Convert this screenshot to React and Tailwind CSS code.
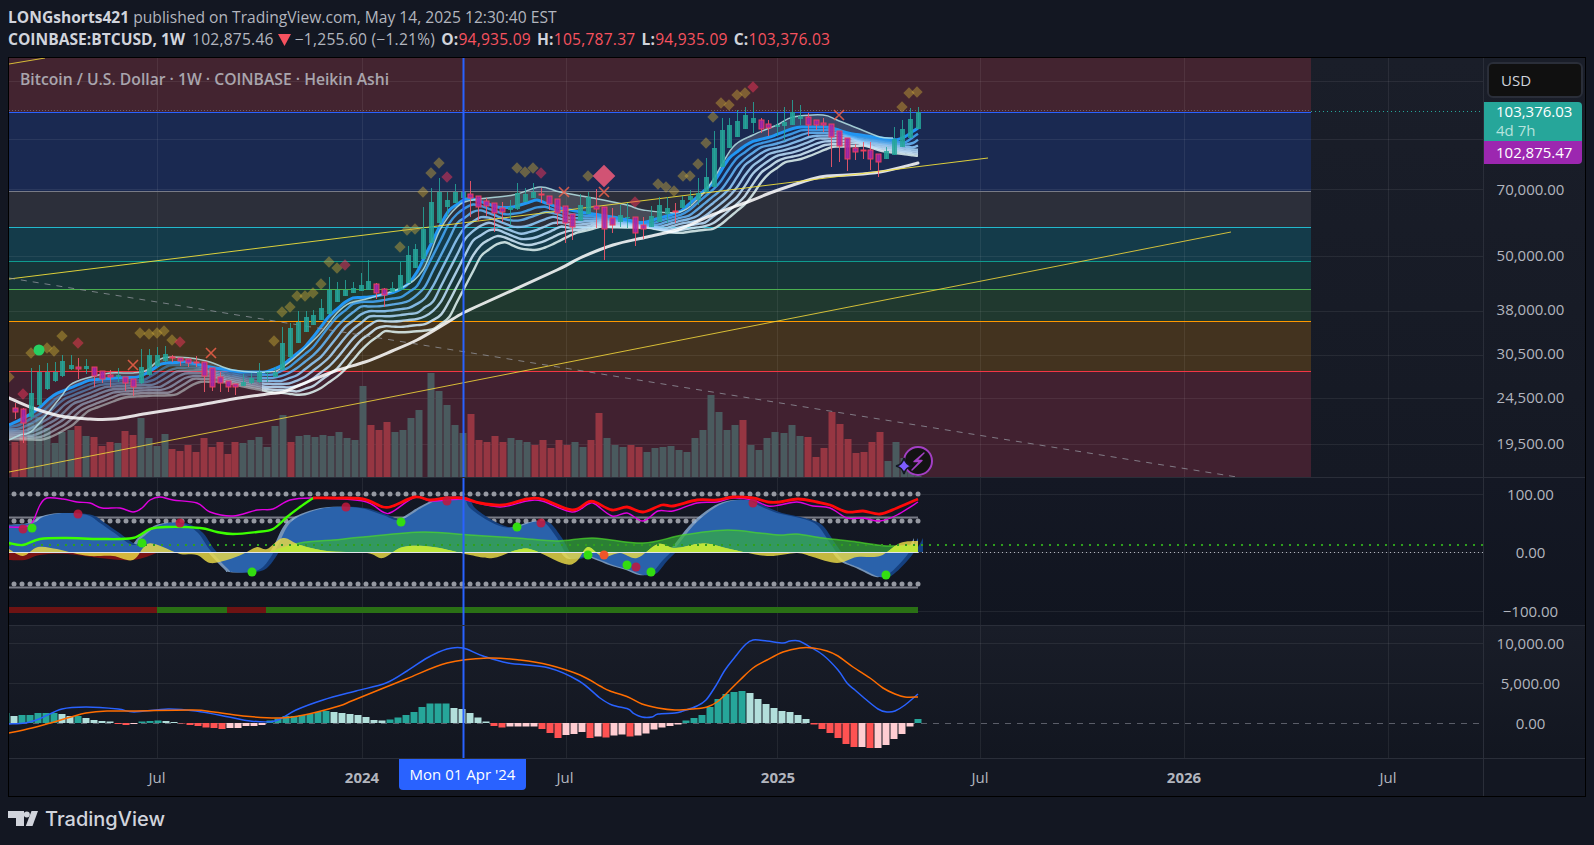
import React from "react";

const smooth = (p) => {
  let d = `M${p[0][0]} ${p[0][1]}`;
  for (let i = 0; i < p.length - 1; i++) {
    const a = p[Math.max(i - 1, 0)], b = p[i], c = p[i + 1], e = p[Math.min(i + 2, p.length - 1)];
    const c1 = [b[0] + (c[0] - a[0]) / 6, b[1] + (c[1] - a[1]) / 6];
    const c2 = [c[0] - (e[0] - b[0]) / 6, c[1] - (e[1] - b[1]) / 6];
    d += `C${c1[0].toFixed(1)} ${c1[1].toFixed(1)} ${c2[0].toFixed(1)} ${c2[1].toFixed(1)} ${c[0]} ${c[1]}`;
  }
  return d;
};
const interp = (p, x) => {
  if (x <= p[0][0]) return p[0][1];
  for (let i = 0; i < p.length - 1; i++) {
    if (x <= p[i + 1][0]) {
      const t = (x - p[i][0]) / (p[i + 1][0] - p[i][0]);
      return p[i][1] + t * (p[i + 1][1] - p[i][1]);
    }
  }
  return p[p.length - 1][1];
};

const GRID_X = [157, 362, 566, 777, 980, 1184, 1388];

const CANDLES = [
  [15,408,412,403,419,0],[23,409,423,408,443,0],[31,393,417,368,420,1],[39,372,405,365,408,1],[47,372,389,363,390,1],[55,372,381,362,382,1],[62,361,376,355,377,1],[71,365,369,355,370,1],[78,367,369,358,379,0],[86,366,369,359,374,1],[94,367,376,367,387,0],[102,371,379,371,383,0],[110,375,377,370,387,0],[118,375,377,368,382,1],[125,377,383,377,391,0],[133,379,387,379,396,0],[141,367,383,349,384,1],[149,355,375,349,376,1],[157,355,366,347,367,1],[165,354,361,346,362,1],[172,357,358,355,362,0],[180,358,361,358,366,0],[188,359,363,359,367,0],[196,362,363,356,367,0],[204,362,376,362,392,0],[212,368,387,368,391,0],[220,377,383,372,392,0],[228,381,387,381,392,0],[235,384,387,384,395,0],[243,382,386,374,386,1],[251,378,383,373,384,1],[259,372,382,363,383,1],[267,372,373,372,382,1],[275,372,377,367,377,1],
  [282,343,370,327,370,1],[290,328,357,323,358,1],[298,322,343,311,343,1],[306,317,332,311,332,1],[313,315,325,310,325,1],[321,308,320,299,320,1],[329,290,314,277,314,1],[337,290,302,282,302,1],[345,290,296,280,296,1],[353,288,293,282,293,1],[361,285,291,273,291,1],[368,281,290,260,290,1],[376,284,293,283,299,0],[384,289,295,288,307,0],[392,288,292,282,292,1],[400,275,290,262,290,1],[408,255,283,246,283,1],[415,249,268,244,268,1],[423,229,259,207,259,1],[431,202,243,188,243,1],[439,192,223,178,223,1],[447,200,207,192,217,1],[455,192,203,184,203,1],[463,192,198,184,198,1],
  [470,194,198,181,217,0],[478,196,207,196,221,0],[486,201,206,198,216,0],[494,203,213,203,232,0],[502,208,212,202,222,0],[510,207,210,200,225,1],[517,193,209,183,210,1],[525,194,202,188,202,1],[533,192,198,183,198,1],[541,194,195,188,203,0],[549,196,204,196,210,0],[557,199,213,199,225,0],[565,206,223,206,243,0],[572,214,227,214,240,0],[580,205,221,194,221,1],[588,197,214,192,214,1],[596,206,209,189,228,0],[604,207,229,207,260,0],[612,218,225,208,233,0],[620,215,222,205,227,1],[627,217,218,203,228,1],[635,217,233,217,246,0],[643,225,229,217,239,0],[651,216,227,206,227,1],[659,205,222,197,222,1],[667,208,214,197,223,1],[675,211,212,203,223,0],[682,200,208,196,208,1],
  [690,196,200,190,206,1],[698,193,200,178,205,1],[706,177,192,158,192,1],[714,148,187,131,187,1],[722,130,167,118,167,1],[729,125,148,118,148,1],[737,121,137,110,137,1],[745,115,129,107,129,1],[753,118,123,102,133,1],[761,120,129,118,133,0],[768,124,128,120,136,0],[777,125,127,112,136,1],[784,122,126,107,141,1],[792,112,125,100,125,1],[800,116,119,105,125,1],[808,117,125,113,136,0],[816,120,125,120,130,0],[823,123,125,118,132,0],[831,124,137,124,167,0],[839,131,146,131,162,0],[847,138,159,138,171,0],[855,148,152,144,160,0],[863,150,151,142,159,0],[870,150,159,142,170,0],[878,154,162,154,177,0],[886,151,159,147,159,1],[894,139,155,127,155,1],[902,129,147,120,147,1],[910,119,138,108,138,1],[918,112,129,107,129,1],
];

const VOL = [
  [15,442,0],[23,437,0],[31,423,1],[39,417,1],[47,428,1],[55,443,1],[62,432,1],[71,430,1],[78,426,0],[86,436,1],[94,437,0],[102,446,0],[110,442,0],[118,443,1],[125,431,0],[133,435,0],[141,418,1],[149,438,1],[157,446,1],[165,434,1],[172,449,0],[180,451,0],[188,445,0],[196,452,0],[204,438,0],[212,447,0],[220,442,0],[228,454,0],[235,442,0],[243,443,1],[251,440,1],[259,437,1],[267,447,1],[275,426,1],[283,415,1],[291,442,0],[299,436,1],
  [307,435,1],[315,437,1],[323,435,1],[331,436,1],[339,432,1],[347,438,1],[355,440,1],[363,386,1],[371,425,0],[379,430,0],[387,422,0],[395,432,1],[403,430,1],[411,418,1],[419,410,1],[431,373,1],[439,391,1],[447,405,1],[455,425,1],[463,433,1],[471,414,0],[479,440,0],[487,442,0],[495,436,0],[503,442,0],[511,438,1],[519,440,1],[527,442,1],[535,445,0],[543,440,0],[551,448,0],[559,440,0],[567,445,0],[575,442,1],[583,447,1],[591,440,0],[599,413,0],[607,438,1],[615,445,1],[623,447,1],[631,445,0],[639,447,0],[647,452,1],[655,448,1],[663,447,1],[671,446,1],[679,450,1],[687,452,1],[695,438,1],[703,430,1],[711,395,1],[719,412,1],[727,430,1],[735,425,1],[743,420,0],[751,445,1],[759,450,1],[767,438,1],[775,432,1],
  [784,433,1],[792,425,1],[800,436,1],[808,437,0],[816,457,0],[824,448,0],[832,412,0],[840,424,0],[848,439,0],[856,453,0],[864,452,0],[872,442,0],[880,432,0],[888,461,1],[896,442,1],[904,458,1],[911,470,1],[918,476,1],
];

const TOP = [[9,425],[20,420],[37,410],[53,395],[70,388],[90,380],[117,378],[140,377],[163,363],[187,362],[210,367],[240,372],[267,372],[283,365],[307,345],[330,315],[350,298],[370,297],[397,292],[413,280],[433,240],[447,212],[463,200],[470,198],[500,208],[513,207],[537,200],[560,208],[580,212],[613,217],[643,223],[680,212],[713,183],[730,157],[750,142],[770,137],[797,127],[830,127],[847,133],[880,138],[900,140],[918,128]];
const THIN = [[9,440],[20,435],[33,430],[60,398],[70,385],[87,378],[110,373],[133,373],[147,370],[163,358],[190,358],[210,362],[233,370],[267,372],[283,367],[317,337],[337,313],[350,303],[370,298],[403,287],[423,270],[440,230],[457,207],[473,200],[513,195],[540,187],[560,192],[593,198],[627,205],[643,210],[680,212],[700,197],[713,180],[733,147],[753,135],[777,125],[793,117],[823,115],[837,120],[857,128],[880,137],[893,138]];
const SLOW = [[9,398],[30,407],[60,416],[90,419],[113,419],[150,413],[200,405],[233,399],[267,394],[283,392],[300,385],[335,371],[365,362],[392,351],[417,340],[443,325],[463,313],[480,305],[557,270],[580,258],[613,245],[647,237],[680,229],[712,215],[750,201],[770,193],[793,185],[820,177],[847,175],[880,172],[918,163]];
const OFF = [[9,2],[283,3],[400,5],[520,6.5],[570,5],[600,2.5],[650,1.5],[680,1.5],[720,2.5],[800,3],[880,2.6],[918,2.5]];
const RIBBON_COLORS = ["#2196f3", "#42a5f5", "#64b5f6", "#90caf9", "#a8d4f7", "#bbdefb", "#cfe8f8", "#dcefee"];
const XS = Array.from({ length: 115 }, (_, i) => Math.min(9 + i * 8, 918));
const ribbonLine = (k) =>
  smooth(XS.map((x) => [x, +(interp(TOP, x - k * 5) + k * interp(OFF, x)).toFixed(1)]));

const DIAMONDS = [[31,353],[47,348],[54,351],[9,377],[62,336],[140,333],[149,334],[157,333],[164,331],[172,340],[274,341],[282,312],[290,307],[297,296],[305,296],[313,293],[321,284],[329,262],[337,268],[400,247],[407,230],[415,229],[423,192],[431,173],[439,163],[517,168],[525,172],[533,168],[588,176],[658,184],[666,187],[674,191],[683,176],[690,176],[698,164],[706,143],[713,117],[721,103],[729,105],[737,95],[745,93],[902,107],[909,93],[917,92]];
const RED_DIAMONDS = [[78,343],[23,394],[180,342],[345,265],[447,177],[541,173],[635,202],[753,87]];
const CROSSES = [[133,365],[211,353],[564,192],[604,192],[839,115]];

const WAVE = [[9,525],[33,523],[43,517],[63,513],[87,515],[100,523],[113,532],[133,545],[143,537],[160,525],[180,523],[197,532],[210,550],[227,568],[233,572],[250,572],[263,567],[277,547],[290,523],[310,512],[333,507],[360,508],[383,515],[400,520],[423,507],[443,498],[463,498],[470,508],[487,520],[503,527],[517,527],[533,522],[545,523],[557,538],[570,558],[588,556],[603,561],[613,565],[630,570],[643,575],[652,573],[663,560],[677,546],[693,526],[710,511],[727,502],[747,500],[760,506],[777,513],[800,518],[817,525],[830,543],[843,560],[860,568],[880,577],[890,573],[903,560],[913,547],[918,538]];
const GREEN_LINE = [[9,543],[23,545],[40,539],[67,538],[100,539],[133,538],[150,529],[167,527],[200,528],[217,532],[233,534],[257,532],[273,529],[287,517],[300,507],[313,498]];
const RED_LINE = [[313,498],[333,498],[363,499],[383,507],[393,506],[415,497],[430,500],[447,498],[463,498],[480,503],[503,505],[527,499],[542,499],[572,510],[588,502],[595,502],[612,510],[627,507],[643,512],[662,505],[673,506],[697,500],[717,500],[733,497],[753,498],[768,502],[780,502],[798,499],[817,502],[830,505],[847,512],[863,511],[880,514],[897,508],[918,499]];
const MAG_LINE = [[9,527],[23,527],[32,523],[40,505],[47,498],[63,499],[77,502],[90,503],[102,508],[120,508],[133,512],[142,508],[150,500],[160,497],[173,500],[197,503],[210,512],[233,516],[257,510],[273,509],[290,500],[313,498],[363,501],[383,512],[392,512],[415,497],[430,501],[447,500],[463,499],[470,501],[500,507],[527,501],[542,501],[572,512],[588,504],[595,504],[612,516],[627,513],[643,521],[658,511],[673,511],[697,503],[717,502],[733,498],[753,500],[768,506],[780,505],[797,502],[813,506],[830,508],[847,518],[863,518],[880,521],[897,515],[918,502]];
const GREEN_AREA = [[270,552],[300,543],[333,540],[363,537],[423,532],[470,535],[517,538],[557,541],[593,538],[643,543],[683,535],[727,530],[760,533],[780,535],[797,534],[823,538],[857,542],[887,546],[918,545]];
const RED_AREA = [[9,560],[25,560],[40,555],[67,554],[100,558],[133,560],[157,553]];
const YELLOW = [[9,549],[23,556],[38,547],[57,549],[73,553],[90,556],[113,556],[133,560],[147,544],[163,547],[180,554],[197,555],[210,563],[227,560],[243,554],[257,547],[267,549],[283,538],[300,545],[327,551],[367,553],[383,558],[403,547],[433,547],[470,555],[493,558],[517,550],[533,550],[565,564],[577,561],[588,547],[603,557],[620,553],[637,558],[658,544],[675,548],[697,544],[710,544],[730,549],[767,556],[797,553],[813,557],[837,563],[857,557],[880,556],[900,543],[918,541]];
const OSC_RED_DOTS = [[23,529],[78,514],[180,523],[346,507],[447,501],[541,523],[636,567],[753,503]];
const OSC_GREEN_DOTS = [[32,528],[142,543],[252,572],[401,522],[517,527],[588,555],[627,565],[651,572],[886,575]];
const DOT_XS = Array.from({ length: 115 }, (_, i) => 14 + i * 8).filter((x) => x <= 918);

const HIST = [10,7,8,8,10,10,10,9,7,7,5,3,2,1.5,-1,-2,-1,1.5,2,2.5,2,1,-0.5,-2,-3,-4.5,-5,-6,-5,-5,-3,-3,-2,2.5,4.5,7,7,8,9,11,12,11,10,9,8,6,3,2.5,3.5,5.5,8,11,16,19.5,19.5,19.5,15,14,10,5.5,1.5,-3,-4.5,-3.5,-3.5,-3.5,-3.5,-6,-10,-15,-12,-11,-9,-15,-13.5,-14.5,-12.5,-11.5,-13.5,-12.5,-10.5,-6.5,-4.5,-3,-1.5,2.5,5,8,16,24,29,31,32,30,24,19,15,12,11,8,4,-1.5,-6,-10,-15,-21,-24,-24,-25,-25,-22,-16,-11,-3.5,4];
const MACD_BLUE = [[9,724],[25,723],[39,719],[62,709],[86,707],[118,709],[134,712],[168,709],[196,711],[229,717],[250,721],[275,721],[296,710],[323,700],[356,691],[386,683],[407,671],[427,658],[447,649],[463,648],[483,656],[508,663],[549,668],[579,681],[600,698],[612,705],[628,709],[633,713],[642,717],[652,717],[658,714],[675,713],[683,711],[697,706],[706,700],[715,687],[725,670],[735,657],[745,645],[753,640],[767,641],[783,643],[790,641],[799,641],[810,647],[823,655],[838,670],[847,683],[855,690],[863,697],[878,709],[887,712],[895,711],[905,705],[918,694]];
const MACD_ORANGE = [[9,733],[32,728],[54,722],[71,717],[86,713],[107,711],[136,711],[193,710],[214,712],[243,716],[279,718],[304,715],[339,706],[354,700],[406,679],[447,663],[488,658],[520,660],[549,665],[580,675],[600,686],[610,691],[628,697],[642,704],[658,708],[675,710],[693,709],[707,707],[717,702],[728,692],[740,680],[753,668],[767,660],[783,652],[800,648],[813,648],[827,651],[838,656],[853,667],[870,678],[883,688],[895,694],[905,697],[918,697]];

const Grid = ({ ys, y1, y2 }) => (
  <g stroke="#ffffff" strokeOpacity="0.07" strokeWidth="1">
    {GRID_X.map((x) => <line key={x} x1={x + 0.5} x2={x + 0.5} y1={y1} y2={y2} />)}
    {ys.map((y) => <line key={y} x1={9} x2={1483} y1={y + 0.5} y2={y + 0.5} />)}
  </g>
);
const Cross = ({ y1, y2 }) => <line x1="463.5" x2="463.5" y1={y1} y2={y2} stroke="#2962ff" strokeWidth="2" />;

const Ribbon = ({ opacity, clip }) => (
  <g clipPath={`url(#${clip})`}>
    {[7, 6, 5, 4, 3, 2, 1].map((k) => (
      <path key={k} d={ribbonLine(k)} fill="none" stroke={RIBBON_COLORS[k]} strokeOpacity={opacity} strokeWidth="2.4" />
    ))}
  </g>
);

function MainPlot() {
  const bands = [
    [58, 54, "#432430"], [112, 79, "#1a2951"], [191, 36, "#2c2f3a"], [227, 34, "#143b4a"],
    [261, 28, "#173538"], [289, 32, "#20392f"], [321, 50, "#43331f"], [371, 107, "#412130"],
  ];
  const lines = [[112, "#2962ff"], [191, "#787b86"], [227, "#22b8cc"], [261, "#0f9b8e"], [289, "#4caf50"], [321, "#ff9800"], [371, "#f23645"]];
  return (
    <svg className="block" width="1474" height="419" viewBox="9 58 1474 419">
      <defs>
        <clipPath id="ribbon-left"><rect x="0" y="50" width="262" height="430" /></clipPath>
        <clipPath id="ribbon-right"><rect x="262" y="50" width="700" height="430" /></clipPath>
      </defs>
      {bands.map(([y, h, c]) => <rect key={y} x="9" y={y} width="1302" height={h} fill={c} />)}
      <Grid ys={[81, 139, 189, 256, 311, 355, 398, 444]} y1={58} y2={477} />
      {lines.map(([y, c]) => <line key={y} x1="9" x2="1311" y1={y + 0.5} y2={y + 0.5} stroke={c} strokeWidth="1" />)}
      <line x1="1311" x2="1483" y1="111.5" y2="111.5" stroke="#26a69a" strokeDasharray="1 3" />
      <line x1="9" x2="1311" y1="110.5" y2="110.5" stroke="#9598a1" strokeOpacity="0.5" strokeDasharray="1 2" />
      {VOL.map(([x, t, g]) => (
        <rect key={x} x={x - 3.5} y={t} width="7" height={477 - t} fill={g ? "#4a5a5e" : "#963642"} />
      ))}
      <path d={smooth(THIN) + " " + smooth(TOP.filter((p) => p[0] <= 893).reverse()).replace("M", "L") + "Z"} fill="#a8b0c4" fillOpacity="0.22" />
      <Ribbon opacity={0.5} clip="ribbon-left" />
      <Ribbon opacity={0.88} clip="ribbon-right" />
      <path d={ribbonLine(0)} fill="none" stroke={RIBBON_COLORS[0]} strokeWidth="3" />
      <path d={smooth(THIN)} fill="none" stroke="#b6e3e6" strokeOpacity="0.85" strokeWidth="1.5" />
      <path d={smooth(SLOW)} fill="none" stroke="#ffffff" strokeOpacity="0.86" strokeWidth="3" strokeLinecap="round" />
      <line x1="9" y1="279" x2="988" y2="158" stroke="#f2e03a" strokeOpacity="0.9" strokeWidth="1" />
      <line x1="9" y1="472" x2="1231" y2="232" stroke="#f2d63a" strokeOpacity="0.85" strokeWidth="1" />
      <line x1="9" y1="64" x2="45" y2="58" stroke="#f2d63a" strokeOpacity="0.85" strokeWidth="1" />
      <line x1="9" y1="278" x2="1243" y2="478" stroke="#9598a1" strokeOpacity="0.75" strokeDasharray="6 6" strokeWidth="1" />
      {CANDLES.map(([x, t, b, wt, wb, g]) => (
        <g key={x}>
          <line x1={x + 0.5} x2={x + 0.5} y1={wt} y2={wb} stroke={g ? "#26a69a" : "#f2566a"} strokeOpacity={g ? 0.85 : 0.9} />
          <rect
            x={x - 2}
            y={t}
            width="5"
            height={Math.max(b - t, 1)}
            fill={g ? "#26a69a" : "#a326a8"}
            fillOpacity={g ? 0.85 : 0.9}
            stroke={g ? "none" : "#ee3f5c"}
            strokeWidth="1"
          />
        </g>
      ))}
      {DIAMONDS.map(([x, y]) => (
        <rect key={x + "-" + y} x={x - 4} y={y - 4} width="8" height="8" transform={`rotate(45 ${x} ${y})`} fill="#c9a83a" fillOpacity="0.45" />
      ))}
      {RED_DIAMONDS.map(([x, y]) => (
        <rect key={x + "-" + y} x={x - 4} y={y - 4} width="8" height="8" transform={`rotate(45 ${x} ${y})`} fill="#f2365a" fillOpacity="0.5" />
      ))}
      <rect x="596" y="168" width="16" height="16" transform="rotate(45 604 176)" fill="#f25a7a" fillOpacity="0.85" />
      {CROSSES.map(([x, y]) => (
        <path key={x} d={`M${x - 5} ${y - 5}L${x + 5} ${y + 5}M${x + 5} ${y - 5}L${x - 5} ${y + 5}`} stroke="#f0604a" strokeOpacity="0.85" strokeWidth="1.6" fill="none" />
      ))}
      <circle cx="39" cy="350" r="5.5" fill="#27d063" />
      <Cross y1={58} y2={477} />
      <circle cx="918" cy="461" r="14" fill="#131313" stroke="#a33fc4" strokeWidth="2" />
      <path d="M924 453L914 461.5L920 461.5L912 470L922 460.5L916.5 460.5Z" fill="#131313" stroke="#a33fc4" strokeWidth="1.4" strokeLinejoin="round" />
      <path d="M904 458Q905.5 464.5 912 466Q905.5 467.5 904 474Q902.5 467.5 896 466Q902.5 464.5 904 458Z" fill="#7c5cff" stroke="#131722" strokeWidth="1.5" />
    </svg>
  );
}

function OscPlot() {
  const area = (pts, base = 552) => smooth(pts) + `L${pts[pts.length - 1][0]} ${base}L${pts[0][0]} ${base}Z`;
  return (
    <svg className="block" width="1474" height="147" viewBox="9 478 1474 147">
      <defs>
        <clipPath id="green-area"><path d={area(GREEN_AREA)} /></clipPath>
      </defs>
      <Grid ys={[494, 552, 611]} y1={478} y2={625} />
      <line x1="9" x2="918" y1="517.5" y2="517.5" stroke="#787b86" strokeWidth="2" />
      <line x1="9" x2="918" y1="587.5" y2="587.5" stroke="#787b86" strokeWidth="2" />
      {[494, 521, 584].map((y) =>
        DOT_XS.map((x) => <circle key={x + "-" + y} cx={x} cy={y} r="2.5" fill="#9598a1" />)
      )}
      <path d={area(RED_AREA)} fill="#7a1414" />
      <path d={area(WAVE)} transform="translate(-4 0)" fill="#8fb3dc" fillOpacity="0.8" />
      <path d={area(WAVE)} transform="translate(5 0)" fill="#15407f" />
      <path d={area(WAVE)} fill="#2a62ab" />
      <path d={area(GREEN_AREA)} fill="#37b33c" fillOpacity="0.68" />
      <path d={smooth(GREEN_AREA)} fill="none" stroke="#4cd92a" strokeOpacity="0.7" strokeWidth="1.5" />
      <path d={area(YELLOW)} fill="#ecdc47" fillOpacity="0.82" />
      <path d={area(YELLOW)} fill="#bde63a" clipPath="url(#green-area)" />
      <line x1="9" x2="918" y1="552.5" y2="552.5" stroke="#e0e3eb" strokeWidth="1" />
      <line x1="918" x2="1483" y1="552.5" y2="552.5" stroke="#b2b5be" strokeDasharray="1 3" />
      <line x1="9" x2="1483" y1="545" y2="545" stroke="#2f9e1e" strokeWidth="2" strokeDasharray="2 6" />
      <path d={smooth(MAG_LINE)} fill="none" stroke="#e000e0" strokeWidth="1.4" />
      <path d={smooth(GREEN_LINE)} fill="none" stroke="#3cff00" strokeWidth="2.4" />
      <path d={smooth(RED_LINE)} fill="none" stroke="#ff0a0a" strokeWidth="2.8" />
      {OSC_RED_DOTS.map(([x, y]) => <circle key={x} cx={x} cy={y} r="4.5" fill="#c3173c" fillOpacity="0.85" />)}
      <circle cx="604" cy="555" r="4.5" fill="#f2552a" />
      {OSC_GREEN_DOTS.map(([x, y]) => <circle key={x} cx={x} cy={y} r="4.5" fill="#33dd11" />)}
      <rect x="9" y="607" width="148" height="6" fill="#6e1313" />
      <rect x="157" y="607" width="70" height="6" fill="#2a7015" />
      <rect x="227" y="607" width="39" height="6" fill="#6e1313" />
      <rect x="266" y="607" width="652" height="6" fill="#2a7015" />
      <Cross y1={478} y2={625} />
    </svg>
  );
}

function MacdPlot() {
  return (
    <svg className="block" width="1474" height="132" viewBox="9 626 1474 132">
      <Grid ys={[643, 683]} y1={626} y2={758} />
      <line x1="9" x2="1483" y1="723.5" y2="723.5" stroke="#787b86" strokeOpacity="0.7" strokeDasharray="6 6" />
      {HIST.map((v, i) => {
        const x = 918 - 8 * (HIST.length - 1 - i);
        const prev = i ? HIST[i - 1] : v;
        const c = v >= 0 ? (v >= prev ? "#26a69a" : "#b2dfdb") : v >= prev ? "#ffcdd2" : "#ff5252";
        return <rect key={x} x={x - 3.5} y={v >= 0 ? 723 - v : 723} width="7" height={Math.abs(v)} fill={c} />;
      })}
      <path d={smooth(MACD_BLUE)} fill="none" stroke="#2962ff" strokeWidth="1.5" />
      <path d={smooth(MACD_ORANGE)} fill="none" stroke="#ff6d00" strokeWidth="1.5" />
      <Cross y1={626} y2={758} />
    </svg>
  );
}

const AxisLabel = ({ top, children }) => (
  <span className={`absolute left-0 w-[93px] text-center -translate-y-1/2 text-[15px] leading-[18px] text-[#b2b5be] ${top}`}>{children}</span>
);

const Red = ({ children }) => <span className="text-[#f7525f]">{children}</span>;

export default function App() {
  return (
    <div className="min-h-screen w-full bg-[#131722] font-['Open_Sans','Liberation_Sans',sans-serif] text-[#d1d4dc] overflow-hidden">
      <header className="h-[57px] pl-2 pt-[6px] text-[15.6px] leading-[22px] whitespace-nowrap text-[#b2b5be]">
        <div>
          <b className="text-[#d1d4dc] font-bold">LONGshorts421</b> published on TradingView.com, May 14, 2025 12:30:40 EST
        </div>
        <div className="flex items-center tracking-[0.22px]">
          <b className="text-[#d1d4dc] font-bold tracking-normal">COINBASE:BTCUSD, 1W</b>
          <span className="ml-[7px]">102,875.46</span>
          <svg className="mx-[4px]" width="13" height="13" viewBox="0 0 13 13"><path d="M0 1H13L6.5 13Z" fill="#f7525f" /></svg>
          <span>−1,255.60 (−1.21%)</span>
          <b className="ml-[6px] font-bold text-[#d1d4dc]">O:</b><Red>94,935.09</Red>
          <b className="ml-[6px] font-bold text-[#d1d4dc]">H:</b><Red>105,787.37</Red>
          <b className="ml-[6px] font-bold text-[#d1d4dc]">L:</b><Red>94,935.09</Red>
          <b className="ml-[6px] font-bold text-[#d1d4dc]">C:</b><Red>103,376.03</Red>
        </div>
      </header>

      <main className="ml-2 w-[1578px] h-[740px] border border-black flex flex-col">
        <section className="h-[420px] flex border-b border-[#2a2e39] bg-linear-to-b from-[#1a1e29] to-[#151924]">
          <div className="relative w-[1474px]">
            <MainPlot />
            <span className="absolute left-[11px] top-[11px] text-[15.7px] leading-[20px] font-semibold text-[#a9a5ad]">
              Bitcoin / U.S. Dollar · 1W · COINBASE · Heikin Ashi
            </span>
          </div>
          <div className="relative w-[102px] border-l border-[#2a2e39]">
            <div className="mt-[4px] ml-[3px] w-[96px] h-[36px] rounded-md border-2 border-[#2a2e39] bg-[#101010] pl-[12px] text-[15px] leading-[32px] text-[#d1d4dc]">USD</div>
            <div className="mt-[4px] w-[98px] h-[39px] bg-[#26a69a] pl-[12px] text-[15px] leading-[19px] text-white rounded-tr-sm">
              103,376.03
              <div className="text-[#b5e3dd]">4d 7h</div>
            </div>
            <div className="w-[98px] h-[23px] bg-[#9c27b0] pl-[12px] text-[15px] leading-[22px] text-white rounded-br-sm">102,875.47</div>
            <AxisLabel top="top-[131px]">70,000.00</AxisLabel>
            <AxisLabel top="top-[197px]">50,000.00</AxisLabel>
            <AxisLabel top="top-[251px]">38,000.00</AxisLabel>
            <AxisLabel top="top-[295px]">30,500.00</AxisLabel>
            <AxisLabel top="top-[339px]">24,500.00</AxisLabel>
            <AxisLabel top="top-[385px]">19,500.00</AxisLabel>
          </div>
        </section>

        <section className="h-[148px] flex border-b border-[#2a2e39] bg-linear-to-b from-[#141824] to-[#111520]">
          <div className="w-[1474px]"><OscPlot /></div>
          <div className="relative w-[102px] border-l border-[#2a2e39]">
            <AxisLabel top="top-[16px]">100.00</AxisLabel>
            <AxisLabel top="top-[74px]">0.00</AxisLabel>
            <AxisLabel top="top-[133px]">−100.00</AxisLabel>
          </div>
        </section>

        <section className="h-[133px] flex border-b border-[#2a2e39] bg-linear-to-b from-[#191d28] to-[#121620]">
          <div className="w-[1474px]"><MacdPlot /></div>
          <div className="relative w-[102px] border-l border-[#2a2e39]">
            <AxisLabel top="top-[17px]">10,000.00</AxisLabel>
            <AxisLabel top="top-[57px]">5,000.00</AxisLabel>
            <AxisLabel top="top-[97px]">0.00</AxisLabel>
          </div>
        </section>

        <section className="relative flex-1 text-[15px] text-[#b2b5be]">
          <div className="absolute right-[101px] top-0 bottom-0 border-l border-[#2a2e39]" />
          {[
            ["Jul", "left-[128px]", ""],
            ["2024", "left-[333px]", "font-bold"],
            ["Jul", "left-[536px]", ""],
            ["2025", "left-[749px]", "font-bold"],
            ["Jul", "left-[951px]", ""],
            ["2026", "left-[1155px]", "font-bold"],
            ["Jul", "left-[1359px]", ""],
          ].map(([t, l, w]) => (
            <span key={l} className={`absolute top-[7px] w-[40px] text-center leading-[22px] ${l} ${w}`}>{t}</span>
          ))}
          <div className="absolute left-[390px] top-0 w-[127px] h-[31px] rounded-b-sm bg-[#2962ff] text-center text-white leading-[30px]">Mon 01 Apr '24</div>
        </section>
      </main>

      <footer className="flex items-center h-[44px] pl-2">
        <svg width="32" height="16" viewBox="0 0 32 16" aria-label="TradingView logo">
          <path d="M0 0H16V15H8V7H0Z" fill="#d1d4dc" />
          <circle cx="18.8" cy="3.6" r="3" fill="#d1d4dc" />
          <path d="M23.5 0H30L24.5 15H17.8Z" fill="#d1d4dc" />
        </svg>
        <span className="ml-[5px] font-['Inter',sans-serif] text-[20px] font-medium text-[#d1d4dc] leading-none">TradingView</span>
      </footer>
    </div>
  );
}
